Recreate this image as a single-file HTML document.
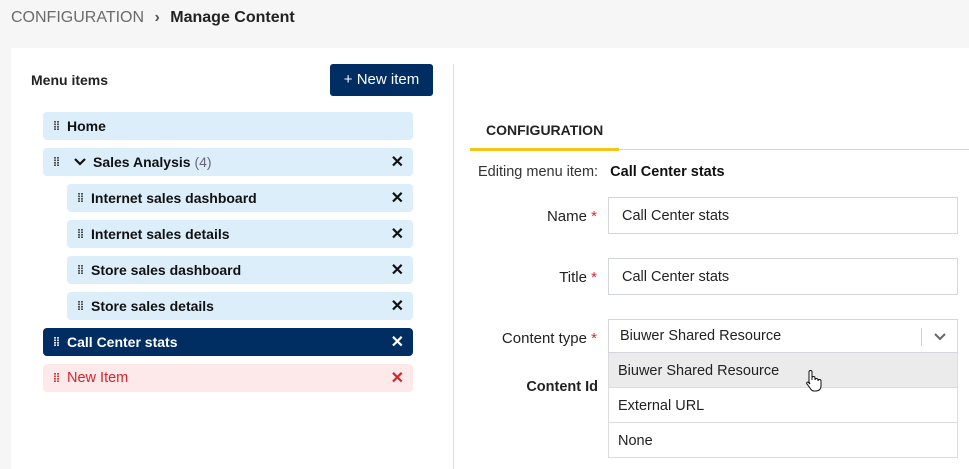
<!DOCTYPE html>
<html><head><style>
*{box-sizing:border-box;margin:0;padding:0}
body{width:969px;height:469px;background:#f6f6f6;font-family:"Liberation Sans",sans-serif;position:relative;overflow:hidden;color:#111}
.abs{position:absolute}
.row{position:absolute;height:28px;border-radius:4px;background:#ddeefb;font-size:14px;font-weight:bold;line-height:28px;padding-left:24px}
.row .d{position:absolute;left:10px;top:0;font-size:12px;letter-spacing:-1px;color:#333;font-weight:bold}
.row .x{position:absolute;right:9px;top:1px;font-size:16px;font-weight:bold}
.lbl{position:absolute;right:372px;font-size:15px;color:#222;text-align:right}
.lbl b{color:#e0262d;font-weight:normal}
.inp{position:absolute;left:608px;width:350px;border:1px solid #d3d6da;background:#fff;font-size:14.5px;padding-left:13px;color:#222}
.opt{position:absolute;left:608px;width:350px;height:35px;border:1px solid #dcdcdc;border-top:none;background:#fff;font-size:14.5px;line-height:36px;padding-left:9px;color:#222}
</style></head><body>
<div class="abs" style="left:11px;top:9px;font-size:16px;color:#6b6b6b">CONFIGURATION <span style="color:#555;margin:0 6px;font-weight:bold">&#8250;</span> <span style="color:#222;font-weight:bold">Manage Content</span></div>
<div class="abs" style="left:11px;top:48px;width:958px;height:421px;background:#fff"></div>
<div class="abs" style="left:453px;top:64px;width:1px;height:405px;background:#ddd"></div>
<div class="abs" style="left:31px;top:72px;font-size:14px;font-weight:bold;color:#222">Menu items</div>
<div class="abs" style="left:330px;top:64px;width:103px;height:32px;background:#002d62;border-radius:3px;color:#fff;font-size:15px;line-height:32px;text-align:center">+ New item</div>

<div class="row" style="left:43px;top:112px;width:370px"><span class="d">⁞⁞</span>Home</div>
<div class="row" style="left:43px;top:148px;width:370px;padding-left:50px"><span class="d">⁞⁞</span><svg class="abs" style="left:31px;top:9px" width="12" height="10"><path d="M1 2l5 5 5-5" stroke="#111" stroke-width="2.2" fill="none"/></svg>Sales Analysis <span style="color:#667;font-weight:normal">(4)</span><span class="x">✕</span></div>
<div class="row" style="left:67px;top:184px;width:346px"><span class="d">⁞⁞</span>Internet sales dashboard<span class="x">✕</span></div>
<div class="row" style="left:67px;top:220px;width:346px"><span class="d">⁞⁞</span>Internet sales details<span class="x">✕</span></div>
<div class="row" style="left:67px;top:256px;width:346px"><span class="d">⁞⁞</span>Store sales dashboard<span class="x">✕</span></div>
<div class="row" style="left:67px;top:292px;width:346px"><span class="d">⁞⁞</span>Store sales details<span class="x">✕</span></div>
<div class="row" style="left:43px;top:328px;width:370px;background:#002d62;color:#fff"><span class="d" style="color:#fff">⁞⁞</span>Call Center stats<span class="x">✕</span></div>
<div class="row" style="left:43px;top:364px;width:370px;background:#fde8ea;color:#d3262d;font-size:14.5px;font-weight:normal"><span class="d" style="color:#d3262d">⁞⁞</span>New Item<span class="x">✕</span></div>

<div class="abs" style="left:486px;top:122px;font-size:14px;font-weight:bold;color:#222">CONFIGURATION</div>
<div class="abs" style="left:470px;top:149px;width:499px;height:1px;background:#d3d6da"></div>
<div class="abs" style="left:470px;top:148px;width:149px;height:3px;background:#f5c518"></div>
<div class="abs" style="left:478px;top:164px;font-size:14.5px;color:#333">Editing menu item:&nbsp;&nbsp; <b style="color:#111">Call Center stats</b></div>

<div class="lbl" style="top:208px">Name <b>*</b></div>
<div class="inp" style="top:197px;height:37px;line-height:37px">Call Center stats</div>
<div class="lbl" style="top:269px">Title <b>*</b></div>
<div class="inp" style="top:258px;height:37px;line-height:37px">Call Center stats</div>
<div class="lbl" style="top:330px">Content type <b>*</b></div>
<div class="inp" style="top:319px;height:34px;line-height:33px;padding-left:11px">Biuwer Shared Resource
<div class="abs" style="left:312px;top:8px;width:1px;height:18px;background:#ccc"></div>
<svg class="abs" style="left:325px;top:12px" width="12" height="9"><path d="M1 2l5 5 5-5" stroke="#666" stroke-width="2" fill="none"/></svg></div>
<div class="lbl" style="top:379px;font-weight:bold;right:371px;font-size:14.5px">Content Id</div>
<div class="opt" style="top:353px;background:#ebebeb">Biuwer Shared Resource</div>
<div class="opt" style="top:388px">External URL</div>
<div class="opt" style="top:423px">None</div>
<svg class="abs" style="left:804px;top:369px" width="18" height="24"><path d="M5 13V3a1.5 1.5 0 0 1 3 0v8V9a1.5 1.5 0 0 1 3 0v2a1.5 1.5 0 0 1 3 0v1a1.5 1.5 0 0 1 3 0v5c0 3-2 5-5 5h-2c-2 0-3-1-4-3l-3-4c-1-1 0-2 1-2l2 2z" fill="#fff" stroke="#111" stroke-width="1"/></svg>
</body></html>
